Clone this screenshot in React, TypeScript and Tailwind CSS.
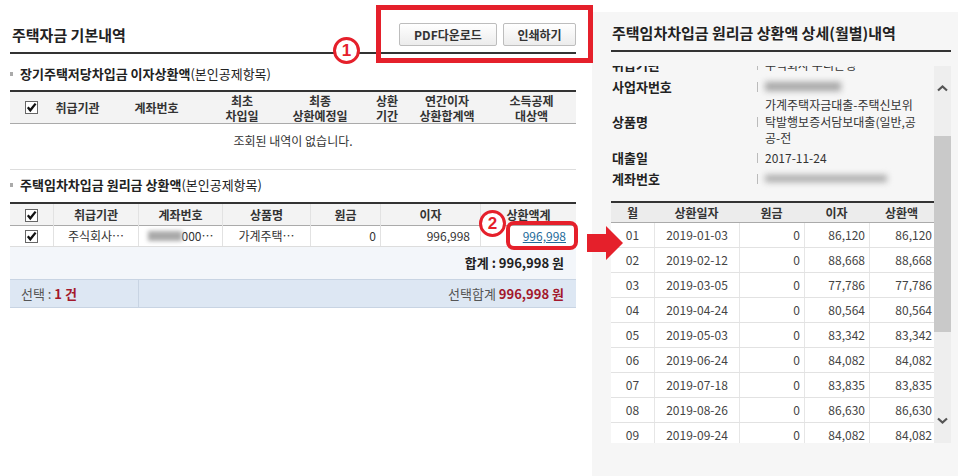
import React from "react";

function Check() {
  return (
    <span className="inline-flex w-[13px] h-[13px] border border-[#666] bg-white items-center justify-center">
      <svg width="11" height="11" viewBox="0 0 11 11">
        <path d="M1.8 5.2 L4.3 8.3 L9.6 1.6" fill="none" stroke="#111" strokeWidth="2.3" />
      </svg>
    </span>
  );
}

function Chevron({ down }: { down?: boolean }) {
  return (
    <svg width="11" height="7" viewBox="0 0 11 7">
      <polyline
        points={down ? "1,1.5 5.5,5.5 10,1.5" : "1,5.5 5.5,1.5 10,5.5"}
        fill="none"
        stroke="#555"
        strokeWidth="2.2"
      />
    </svg>
  );
}

const monthly = [
  ["01", "2019-01-03", "0", "86,120", "86,120"],
  ["02", "2019-02-12", "0", "88,668", "88,668"],
  ["03", "2019-03-05", "0", "77,786", "77,786"],
  ["04", "2019-04-24", "0", "80,564", "80,564"],
  ["05", "2019-05-03", "0", "83,342", "83,342"],
  ["06", "2019-06-24", "0", "84,082", "84,082"],
  ["07", "2019-07-18", "0", "83,835", "83,835"],
  ["08", "2019-08-26", "0", "86,630", "86,630"],
  ["09", "2019-09-24", "0", "84,082", "84,082"],
];

export default function App() {
  return (
    <div className="relative w-[958px] h-[476px] bg-white overflow-hidden flex text-[#333] font-['Noto_Sans_CJK_KR','Noto_Sans',sans-serif]">
      {/* LEFT PANEL */}
      <div className="w-[592px] shrink-0 pl-[10px] pr-[16px]">
        <div className="flex items-center justify-between pt-[23px] pb-[6px] border-b-2 border-[#333]">
          <h1 className="pl-[2px] text-[15px] leading-[23px] font-bold text-[#222]">주택자금 기본내역</h1>
          <div className="flex gap-[6px]">
            <button className="h-[23px] w-[98px] rounded-[2px] border border-[#bdbdbd] bg-gradient-to-b from-white to-[#ececec] text-[12px] leading-[20px] font-bold text-[#333]">
              PDF다운로드
            </button>
            <button className="h-[23px] w-[73px] rounded-[2px] border border-[#bdbdbd] bg-gradient-to-b from-white to-[#ececec] text-[12px] leading-[20px] font-bold text-[#333]">
              인쇄하기
            </button>
          </div>
        </div>

        {/* section 1 */}
        <div className="mt-[10px] h-[20px] flex items-center text-[13px] leading-[20px] text-[#222]">
          <span className="w-[3px] h-[4px] bg-[#aaa] mr-[7px]" />
          <b>장기주택저당차입금 이자상환액</b>
          <span>(본인공제항목)</span>
        </div>
        <div className="mt-[6px] border-t-2 border-[#333]">
          <div className="grid grid-cols-[43px_49px_109px_62px_94px_40px_80px_89px] h-[32px] bg-[#f3f3f3] border-b border-[#aaa] text-[12px] leading-[15px] font-bold text-[#333]">
            <div className="flex items-center justify-center"><Check /></div>
            <div className="flex items-center justify-center">취급기관</div>
            <div className="flex items-center justify-center">계좌번호</div>
            <div className="flex flex-col items-center justify-center"><span>최초</span><span>차입일</span></div>
            <div className="flex flex-col items-center justify-center"><span>최종</span><span>상환예정일</span></div>
            <div className="flex flex-col items-center justify-center"><span>상환</span><span>기간</span></div>
            <div className="flex flex-col items-center justify-center"><span>연간이자</span><span>상환합계액</span></div>
            <div className="flex flex-col items-center justify-center"><span>소득공제</span><span>대상액</span></div>
          </div>
          <div className="h-[46px] pt-[9px] text-center text-[12px] leading-[16px] border-b border-[#ddd]">
            조회된 내역이 없습니다.
          </div>
        </div>

        {/* section 2 */}
        <div className="mt-[5px] h-[20px] flex items-center text-[13px] leading-[20px] text-[#222]">
          <span className="w-[3px] h-[4px] bg-[#aaa] mr-[7px]" />
          <b>주택임차차입금 원리금 상환액</b>
          <span>(본인공제항목)</span>
        </div>
        <div className="mt-[7px] border-t-2 border-[#333] text-[12px]">
          <div className="grid grid-cols-[43px_85px_84px_88px_70px_100px_96px] h-[22px] bg-[#f3f3f3] border-b border-[#aaa] leading-[22px] font-bold">
            <div className="flex items-center justify-center"><Check /></div>
            <div className="text-center border-l border-[#e2e2e2]">취급기관</div>
            <div className="text-center border-l border-[#e2e2e2]">계좌번호</div>
            <div className="text-center border-l border-[#e2e2e2]">상품명</div>
            <div className="text-center border-l border-[#e2e2e2]">원금</div>
            <div className="text-center border-l border-[#e2e2e2]">이자</div>
            <div className="text-center border-l border-[#e2e2e2]">상환액계</div>
          </div>
          <div className="grid grid-cols-[43px_85px_84px_88px_70px_100px_96px] h-[21px] leading-[20px] border-b border-[#ddd] bg-white">
            <div className="flex items-center justify-center"><Check /></div>
            <div className="text-center border-l border-[#e2e2e2]">주식회사…</div>
            <div className="flex items-center justify-center border-l border-[#e2e2e2]">
              <span className="w-[34px] h-[10px] bg-[#a9a9a9] blur-[2px]" />
              <span>000…</span>
            </div>
            <div className="text-center border-l border-[#e2e2e2]">가계주택…</div>
            <div className="text-right pr-[4px] border-l border-[#e2e2e2]">0</div>
            <div className="text-right pr-[10px] border-l border-[#e2e2e2]">996,998</div>
            <div className="text-right pr-[10px] border-l border-[#e2e2e2]">
              <span className="underline text-[#226a9a]">996,998</span>
            </div>
          </div>
          <div className="h-[32px] flex items-center justify-end pr-[12px] bg-[#f3f6fa] font-bold text-[13px] text-[#222]">
            합계 : 996,998 원
          </div>
          <div className="grid grid-cols-[128px_1fr] h-[29px] bg-[#dde7f3] border-t border-b border-[#c8d4e3] text-[13px] leading-[27px]">
            <div className="pl-[11px] text-[#555]">
              선택 : <b className="text-[#a3182c]">1 건</b>
            </div>
            <div className="text-right pr-[12px] border-l border-[#c8d4e3] text-[#555]">
              선택합계 <b className="text-[#a3182c]">996,998 원</b>
            </div>
          </div>
        </div>
      </div>

      {/* RIGHT PANEL */}
      <div className="flex-1 mt-[12px] bg-[#f6f6f6] pl-[19px] pr-[7px] flex flex-col">
        <div className="pt-[11px] pb-[7px] border-b-2 border-[#333] text-[15px] leading-[20px] font-bold text-[#222] pl-[1px]">
          주택임차차입금 원리금 상환액 상세(월별)내역
        </div>
        <div className="mt-[14px] h-[377px] flex">
          <div className="flex-1 overflow-hidden">
            <div className="-mt-[12px]">
              <div className="grid grid-cols-[144px_5px_1fr] text-[12px]">
                <div className="h-[22px] flex items-center pl-[1px] text-[13px] font-bold text-[#222]">취급기관</div>
                <div className="flex items-center justify-center"><span className="w-px h-[10px] bg-[#bbb]" /></div>
                <div className="flex items-center pl-[5px]">주식회사 우리은행</div>

                <div className="h-[21px] flex items-center pl-[1px] text-[13px] font-bold text-[#222]">사업자번호</div>
                <div className="flex items-center justify-center"><span className="w-px h-[10px] bg-[#bbb]" /></div>
                <div className="flex items-center pl-[5px]"><span className="w-[76px] h-[9px] bg-[#a5a5a5] blur-[3px]" /></div>

                <div className="h-[50px] flex items-center pl-[1px] text-[13px] font-bold text-[#222]">상품명</div>
                <div className="flex items-center justify-center"><span className="w-px h-[10px] bg-[#bbb]" /></div>
                <div className="flex items-center pl-[5px] leading-[16.5px]">
                  <div>가계주택자금대출-주택신보위<br />탁발행보증서담보대출(일반,공<br />공-전</div>
                </div>

                <div className="h-[21px] flex items-center pl-[1px] text-[13px] font-bold text-[#222]">대출일</div>
                <div className="flex items-center justify-center"><span className="w-px h-[10px] bg-[#bbb]" /></div>
                <div className="flex items-center pl-[5px]">2017-11-24</div>

                <div className="h-[21px] flex items-center pl-[1px] text-[13px] font-bold text-[#222]">계좌번호</div>
                <div className="flex items-center justify-center"><span className="w-px h-[10px] bg-[#bbb]" /></div>
                <div className="flex items-center pl-[5px]"><span className="w-[122px] h-[7px] bg-[#a8a8a8] blur-[3px]" /></div>
              </div>

              <div className="mt-[12px] border-t-2 border-[#333] text-[12px]">
                <div className="grid grid-cols-[43px_85px_65px_65px_65px] h-[20px] bg-[#ececec] border-b border-[#aaa] leading-[19px] font-bold text-[#333]">
                  <div className="text-center">월</div>
                  <div className="text-center">상환일자</div>
                  <div className="text-center">원금</div>
                  <div className="text-center">이자</div>
                  <div className="text-center">상환액</div>
                </div>
                {monthly.map((r) => (
                  <div key={r[0]} className="grid grid-cols-[43px_85px_65px_65px_65px] h-[25px] bg-white border-b border-[#e2e2e2] leading-[24px] text-[#444]">
                    <div className="text-center">{r[0]}</div>
                    <div className="text-center border-l border-[#e6e6e6]">{r[1]}</div>
                    <div className="text-right pr-[4px] border-l border-[#e6e6e6]">{r[2]}</div>
                    <div className="text-right pr-[4px] border-l border-[#e6e6e6]">{r[3]}</div>
                    <div className="text-right pr-[2px] border-l border-[#e6e6e6]">{r[4]}</div>
                  </div>
                ))}
              </div>
            </div>
          </div>
          {/* scrollbar */}
          <div className="w-[17px] bg-[#eeeeee] flex flex-col">
            <div className="h-[44px] flex items-center justify-center"><Chevron /></div>
            <div className="h-[26px]" />
            <div className="h-[196px] bg-[#c9c9c9]" />
            <div className="flex-1" />
            <div className="h-[45px] flex items-center justify-center"><Chevron down /></div>
          </div>
        </div>
      </div>

      {/* annotations */}
      <div className="absolute left-[376px] top-[5px] w-[217px] h-[58px] border-[5px] border-[#e5202b]" />
      <div className="absolute left-[333px] top-[37px] w-[27px] h-[27px] rounded-full border-[3px] border-[#e5202b] bg-white flex items-center justify-center text-[#e5202b] font-bold text-[17px] leading-none font-['Liberation_Sans',sans-serif]">
        1
      </div>
      <div className="absolute left-[479px] top-[210px] w-[27px] h-[27px] rounded-full border-[3px] border-[#e5202b] bg-white flex items-center justify-center text-[#e5202b] font-bold text-[17px] leading-none font-['Liberation_Sans',sans-serif]">
        2
      </div>
      <div className="absolute left-[506px] top-[221px] w-[72px] h-[29px] rounded-[8px] border-4 border-[#e5202b]" />
      <svg className="absolute left-[586px] top-[224px]" width="38" height="38" viewBox="0 0 38 38">
        <polygon points="1,10 20,10 20,2 37,19 20,36 20,28 1,28" fill="#e5202b" />
      </svg>
    </div>
  );
}
